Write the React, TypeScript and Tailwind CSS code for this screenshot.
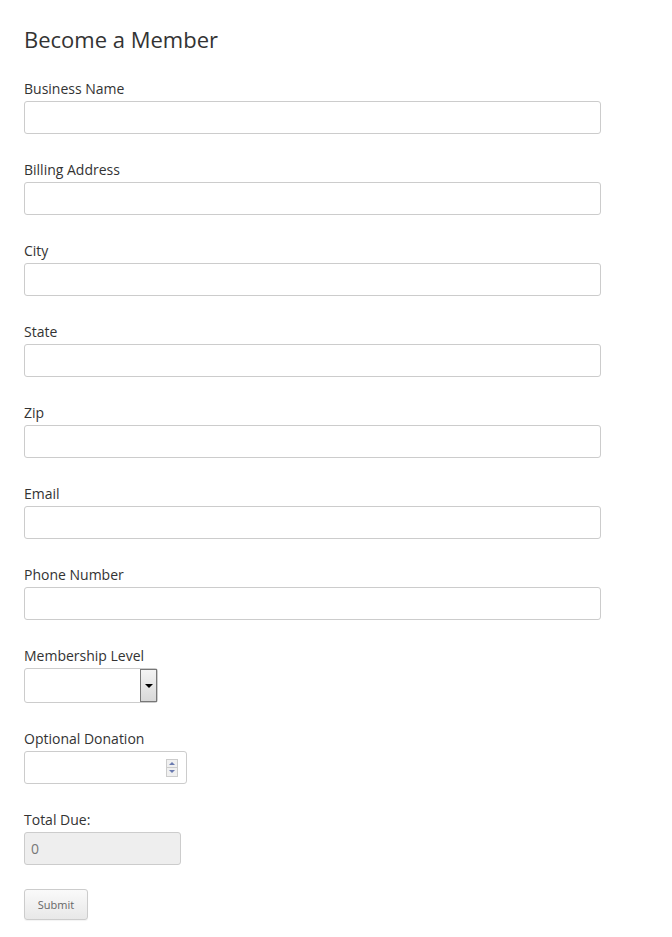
export default function App() {
  const fields = [
    "Business Name",
    "Billing Address",
    "City",
    "State",
    "Zip",
    "Email",
    "Phone Number",
  ];

  return (
    <div className="min-h-screen bg-white font-['Open_Sans',sans-serif] text-[#333]">
      <div className="px-6 pt-[24px]">
        <h1 className="text-[22px] leading-[30px] font-normal text-[#333]">Become a Member</h1>

        <form className="mt-[24px] flex flex-col">
          {fields.map((f) => (
            <div key={f} className="mb-[25px]">
              <label className="block text-[14px] leading-[22px]">{f}</label>
              <input
                type="text"
                className="mt-[1px] block h-[33px] w-[577px] rounded-[3px] border border-[#ccc] bg-white px-[6px] text-[14px] outline-none"
              />
            </div>
          ))}

          <div className="mb-[25px]">
            <label className="block text-[14px] leading-[22px]">Membership Level</label>
            <div className="mt-[1px] flex h-[35px] w-[134px] rounded-[3px] border border-[#ccc] bg-white">
              <div className="flex-1" />
              <div className="flex w-[17px] items-center justify-center border border-[#777] bg-gradient-to-b from-[#f4f4f4] to-[#d8d8d8]">
                <span className="block h-0 w-0 border-x-[4px] border-t-[4px] border-x-transparent border-t-black" />
              </div>
            </div>
          </div>

          <div className="mb-[25px]">
            <label className="block text-[14px] leading-[22px]">Optional Donation</label>
            <div className="mt-[1px] flex h-[33px] w-[163px] items-center rounded-[3px] border border-[#ccc] bg-white pr-[8px]">
              <div className="flex-1" />
              <div className="flex h-[18px] w-[12px] flex-col border border-[#ccc] bg-[#f0f0f0]">
                <div className="flex flex-1 items-center justify-center border-b border-[#ccc]">
                  <span className="block h-0 w-0 border-x-[3px] border-b-[3px] border-x-transparent border-b-[#6b7bb0]" />
                </div>
                <div className="flex flex-1 items-center justify-center">
                  <span className="block h-0 w-0 border-x-[3px] border-t-[3px] border-x-transparent border-t-[#6b7bb0]" />
                </div>
              </div>
            </div>
          </div>

          <div className="mb-[24px]">
            <label className="block text-[14px] leading-[22px]">Total Due:</label>
            <div className="mt-[1px] flex h-[33px] w-[157px] items-center rounded-[3px] border border-[#ccc] bg-[#eee] px-[6px] text-[14px] text-[#777]">
              0
            </div>
          </div>

          <div>
            <button
              type="button"
              className="h-[31px] w-[64px] rounded-[3px] border border-[#ccc] bg-gradient-to-b from-[#fafafa] to-[#e8e8e8] pt-[1px] text-[11px] text-[#666] shadow-[0_1px_1px_rgba(0,0,0,0.05)]"
            >
              Submit
            </button>
          </div>
        </form>
      </div>
    </div>
  );
}
